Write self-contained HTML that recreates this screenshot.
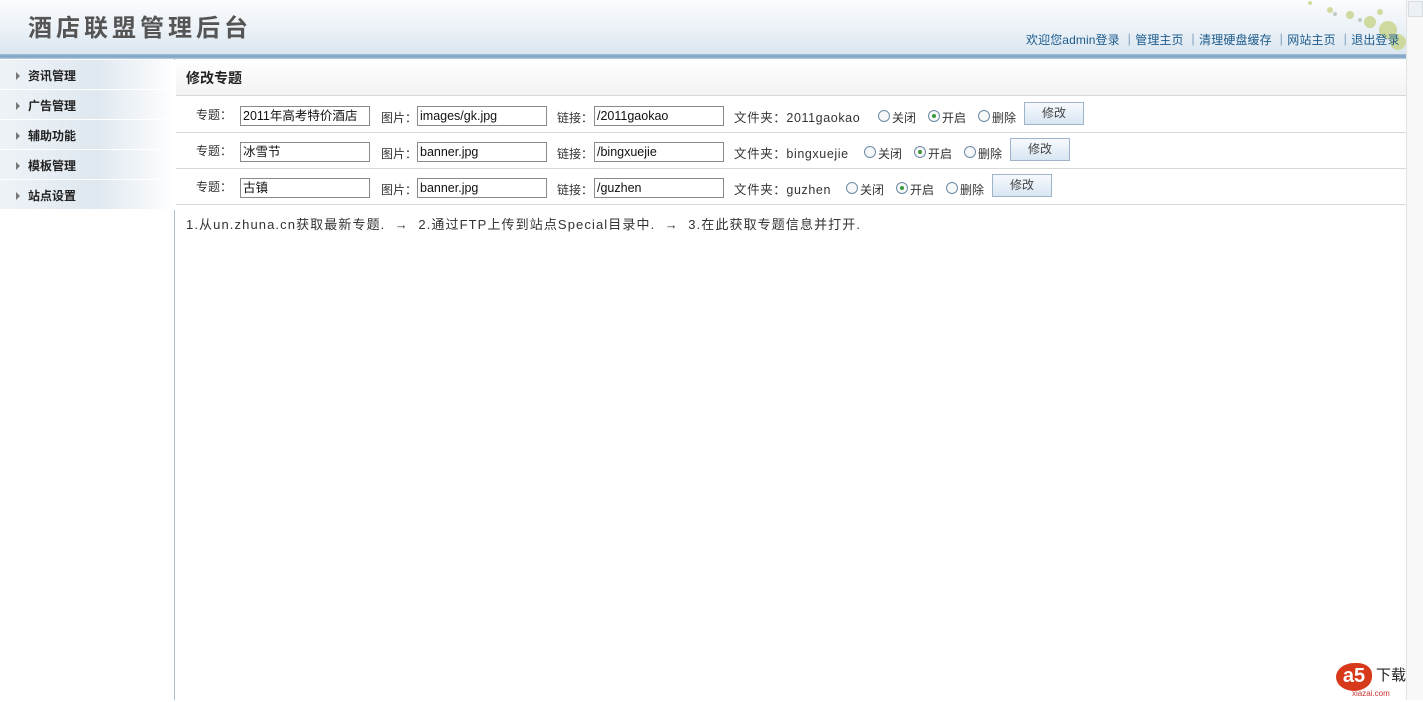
<!DOCTYPE html>
<html><head><meta charset="utf-8"><style>
*{margin:0;padding:0;box-sizing:border-box}
body{width:1423px;height:700px;overflow:hidden;background:#fff;font-family:"Liberation Sans","Noto Sans CJK SC",sans-serif;font-size:12px;color:#333;position:relative;line-height:16px}
.a{position:absolute;white-space:nowrap}
#hd{left:0;top:0;width:1406px;height:54px;background:linear-gradient(#fbfcfd,#e6eef5 70%,#dbe6ef)}
#bl{left:0;top:54px;width:1406px;height:5px;background:linear-gradient(#a9c3da,#7fa3c4 40%,#93b4d0 80%,#c8d9e7)}
#title{left:28px;top:14px;font-size:24px;line-height:30px;color:#555;letter-spacing:4px;font-weight:bold}
#nav{left:1026px;top:32px;font-size:12px;color:#1d5b8c;letter-spacing:0.1px}
#side{left:0;top:59px;width:175px;height:641px;border-right:1px solid #a9c0d3;background:#fff}
.mi{position:absolute;left:0;width:175px;height:30px;background:linear-gradient(90deg,#eef3f7,#dfe8f0 55%,#fff);border-bottom:1px solid #fff;font-weight:bold;font-size:12px;color:#222;padding:8px 0 0 28px}
.mi:before{content:"";position:absolute;left:16px;top:12px;border-left:4px solid #777;border-top:4px solid transparent;border-bottom:4px solid transparent}
#th{left:176px;top:59px;width:1230px;height:37px;background:linear-gradient(#fff,#f3f3f3);border-bottom:1px solid #d8d8d8;font-weight:bold;font-size:14px;color:#222;padding:11px 0 0 10px}
.ln{position:absolute;left:176px;width:1230px;height:1px;background:#d8d8d8}
.in{position:absolute;height:20px;width:130px;border:1px solid #8a8a8a;background:#fff;font-size:12.5px;padding:1px 2px;color:#111;line-height:17px}
.rd{position:absolute;width:12px;height:12px;border:1px solid #6d8aa5;border-radius:50%;background:#f6f8fa}
.rd.on:after{content:"";position:absolute;left:3px;top:3px;width:4px;height:4px;border-radius:50%;background:#3a9a3a}
.bt{position:absolute;width:60px;height:23px;border:1px solid #9fb4c8;background:linear-gradient(#f7fafd,#d8e6f3);font-size:12px;color:#444;text-align:center;padding-top:2px}
#sb{left:1406px;top:0;width:17px;height:700px;background:#f8f8f8;border-left:1px solid #e2e2e2}
.f{font-size:12.5px;letter-spacing:0.6px}
</style></head><body>
<div id="hd" class="a"></div>
<svg class="a" style="left:1290px;top:0" width="116" height="54"><g fill="#c8d48a" opacity=".8"><circle cx="20" cy="3" r="2"/><circle cx="40" cy="10" r="3"/><circle cx="60" cy="15" r="4"/><circle cx="80" cy="22" r="6"/><circle cx="98" cy="30" r="9"/><circle cx="108" cy="42" r="8"/><circle cx="90" cy="12" r="3"/></g><g fill="#9fb0a0" opacity=".6"><circle cx="45" cy="14" r="2"/><circle cx="70" cy="20" r="2"/></g></svg>
<div id="bl" class="a"></div>
<div id="title" class="a">酒店联盟管理后台</div>
<div id="nav" class="a">欢迎您admin登录 ｜管理主页 ｜清理硬盘缓存 ｜网站主页 ｜退出登录</div>
<div id="side" class="a">
<div class="mi" style="top:1px">资讯管理</div>
<div class="mi" style="top:31px">广告管理</div>
<div class="mi" style="top:61px">辅助功能</div>
<div class="mi" style="top:91px">模板管理</div>
<div class="mi" style="top:121px">站点设置</div>
</div>
<div id="th" class="a">修改专题</div>
<div class="ln" style="top:132px"></div>
<div class="ln" style="top:168px"></div>
<div class="ln" style="top:204px"></div>

<div class="a" style="left:196px;top:107px">专题：</div>
<div class="in" style="left:240px;top:106px">2011年高考特价酒店</div>
<div class="a" style="left:381px;top:110px">图片：</div>
<div class="in" style="left:417px;top:106px">images/gk.jpg</div>
<div class="a" style="left:557px;top:110px">链接：</div>
<div class="in" style="left:594px;top:106px">/2011gaokao</div>
<div class="a f" style="left:734px;top:110px">文件夹：2011gaokao</div>
<div class="rd" style="left:878px;top:110px"></div><div class="a" style="left:892px;top:110px">关闭</div>
<div class="rd on" style="left:928px;top:110px"></div><div class="a" style="left:942px;top:110px">开启</div>
<div class="rd" style="left:978px;top:110px"></div><div class="a" style="left:992px;top:110px">删除</div>
<div class="bt" style="left:1024px;top:102px">修改</div>

<div class="a" style="left:196px;top:143px">专题：</div>
<div class="in" style="left:240px;top:142px">冰雪节</div>
<div class="a" style="left:381px;top:146px">图片：</div>
<div class="in" style="left:417px;top:142px">banner.jpg</div>
<div class="a" style="left:557px;top:146px">链接：</div>
<div class="in" style="left:594px;top:142px">/bingxuejie</div>
<div class="a f" style="left:734px;top:146px">文件夹：bingxuejie</div>
<div class="rd" style="left:864px;top:146px"></div><div class="a" style="left:878px;top:146px">关闭</div>
<div class="rd on" style="left:914px;top:146px"></div><div class="a" style="left:928px;top:146px">开启</div>
<div class="rd" style="left:964px;top:146px"></div><div class="a" style="left:978px;top:146px">删除</div>
<div class="bt" style="left:1010px;top:138px">修改</div>

<div class="a" style="left:196px;top:179px">专题：</div>
<div class="in" style="left:240px;top:178px">古镇</div>
<div class="a" style="left:381px;top:182px">图片：</div>
<div class="in" style="left:417px;top:178px">banner.jpg</div>
<div class="a" style="left:557px;top:182px">链接：</div>
<div class="in" style="left:594px;top:178px">/guzhen</div>
<div class="a f" style="left:734px;top:182px">文件夹：guzhen</div>
<div class="rd" style="left:846px;top:182px"></div><div class="a" style="left:860px;top:182px">关闭</div>
<div class="rd on" style="left:896px;top:182px"></div><div class="a" style="left:910px;top:182px">开启</div>
<div class="rd" style="left:946px;top:182px"></div><div class="a" style="left:960px;top:182px">删除</div>
<div class="bt" style="left:992px;top:174px">修改</div>

<div class="a" style="left:186px;top:217px;font-size:13px;letter-spacing:1.1px">1.从un.zhuna.cn获取最新专题. &nbsp;→ &nbsp;2.通过FTP上传到站点Special目录中. &nbsp;→ &nbsp;3.在此获取专题信息并打开.</div>

<div id="sb" class="a"><div style="position:absolute;left:1px;top:1px;width:15px;height:16px;background:#eef1f4;border:1px solid #d6dce2"></div></div>
<div class="a" style="left:1336px;top:663px;width:36px;height:28px;background:#d63a1a;border-radius:50% 40% 50% 50%;color:#fff;font-weight:bold;font-size:20px;text-align:center;line-height:26px">a5</div>
<div class="a" style="left:1376px;top:668px;font-size:15px;color:#222">下载</div>
<div class="a" style="left:1352px;top:686px;font-size:8px;color:#c33">xiazai.com</div>
</body></html>
